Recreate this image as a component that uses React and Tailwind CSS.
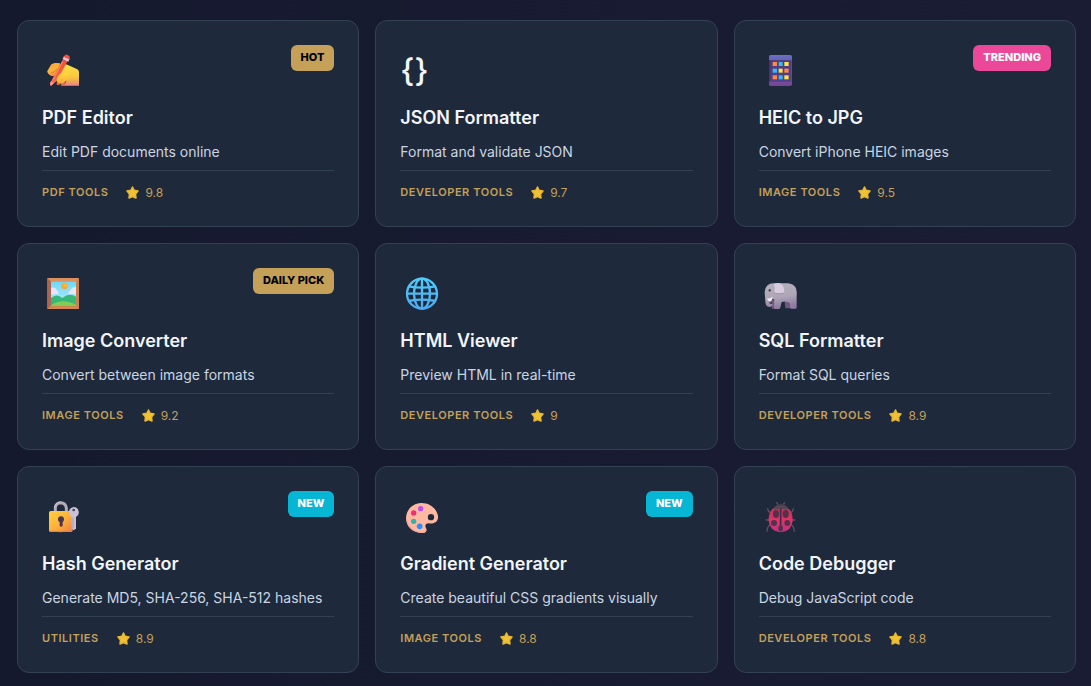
import React from 'react';
import { clsx } from 'clsx';

const WritingIcon = () => (
  <svg viewBox="6 -9 132 144" className="h-12 w-11" aria-hidden="true">
    <defs>
      <linearGradient id="fingerFill" x1="0" y1="0" x2="0.4" y2="1">
        <stop offset="0" stopColor="#ff9f35" />
        <stop offset="0.6" stopColor="#fcb53a" />
        <stop offset="1" stopColor="#f6923f" />
      </linearGradient>
      <linearGradient id="palmFill" x1="0" y1="0" x2="0" y2="1">
        <stop offset="0" stopColor="#ffe046" />
        <stop offset="0.6" stopColor="#f8c83f" />
        <stop offset="0.85" stopColor="#efa05c" />
        <stop offset="1" stopColor="#ee7f95" />
      </linearGradient>
      <linearGradient id="thumbFill" x1="0" y1="0" x2="0" y2="1">
        <stop offset="0" stopColor="#ffd940" />
        <stop offset="1" stopColor="#f9a93c" />
      </linearGradient>
      <linearGradient id="pencilFill" x1="0" y1="0" x2="1" y2="0">
        <stop offset="0" stopColor="#ff6f4d" />
        <stop offset="1" stopColor="#e64d33" />
      </linearGradient>
    </defs>
    <path d="M33 50C38 44 50 44 60 46L56 84H34C25 79 21 74 22 69Z" fill="url(#fingerFill)" />
    <path d="M34 74Q42 76 52 62" fill="none" stroke="#e2832f" strokeWidth="3" />
    <path d="M68 46L82 50L112 64Q117 67 117 73V113H72L82 92L58 78Z" fill="url(#palmFill)" />
    <path d="M66 102L73 98L76 111Q70 116 62 112ZM50 104L60 101L58 112L50 110Z" fill="#e9695a" />
    <path d="M71 30L85 36L49 100L35 112L31 104Z" fill="url(#pencilFill)" />
    <path d="M68 40L38 98" stroke="#ff8a66" strokeWidth="3" />
    <path d="M60 79C68 72 78 74 86 78C93 84 88 92 80 98L70 105C62 109 51 107 50 99C49 91 54 84 60 79Z" fill="url(#thumbFill)" />
    <path d="M72 24L89 32L85 41L68 33Z" fill="#ddc5e4" />
    <path d="M76 20Q79 19 88 24Q91 27 88 34L71 27Z" fill="#f4503d" />
    <path d="M31 101L42 105L33 114L30 111Z" fill="#f59e94" />
  </svg>
);

const PhoneIcon = () => (
  <svg viewBox="12 -9 132 144" className="h-12 w-11" aria-hidden="true">
    <defs>
      <linearGradient id="phoneFill" x1="0" y1="0" x2="0" y2="1">
        <stop offset="0" stopColor="#6d70c4" />
        <stop offset="0.17" stopColor="#6264b3" />
        <stop offset="0.18" stopColor="#503a78" />
        <stop offset="0.85" stopColor="#51418a" />
        <stop offset="0.87" stopColor="#7a4a9c" />
        <stop offset="1" stopColor="#6d4892" />
      </linearGradient>
    </defs>
    <rect x="42" y="21" width="69" height="93" rx="5" fill="url(#phoneFill)" />
    <path d="M44 36V100" stroke="#4c3263" strokeWidth="4" />
    <path d="M109 36V100" stroke="#5b52a3" strokeWidth="3" />
    <g fill="#ff8a45">
      <rect x="53" y="42" width="13" height="12" />
      <rect x="88" y="62" width="13" height="12" />
      <rect x="53" y="82" width="13" height="12" />
    </g>
    <g fill="#36baf7">
      <rect x="71" y="42" width="12" height="12" />
      <rect x="53" y="62" width="13" height="12" />
      <rect x="71" y="82" width="12" height="12" />
    </g>
    <g fill="#ffe04d">
      <rect x="88" y="42" width="13" height="12" />
      <rect x="71" y="62" width="12" height="12" />
      <rect x="88" y="82" width="13" height="12" />
    </g>
  </svg>
);

const PictureIcon = () => (
  <svg viewBox="6 -6 132 144" className="h-12 w-11" aria-hidden="true">
    <defs>
      <linearGradient id="skyFill" x1="0" y1="0" x2="0" y2="1">
        <stop offset="0" stopColor="#6ed8f8" />
        <stop offset="1" stopColor="#b5ecfb" />
      </linearGradient>
      <clipPath id="pictureClip">
        <rect x="33" y="34" width="75" height="73" />
      </clipPath>
    </defs>
    <rect x="22" y="24" width="95" height="93" rx="2" fill="#c98158" />
    <path d="M22 24L33 34V107L22 117Z" fill="#a96650" />
    <path d="M22 24H117L108 34H33Z" fill="#dc915f" />
    <path d="M22 117H117L108 107H33Z" fill="#d38552" />
    <g clipPath="url(#pictureClip)">
      <rect x="33" y="34" width="75" height="73" fill="url(#skyFill)" />
      <path d="M33 54Q47 49 51 62Q57 65 54 73H33ZM108 51Q96 51 92 60Q83 65 86 73H108Z" fill="#e9e4fa" />
      <path d="M33 84Q50 69 67 84Q88 66 108 80V107H33Z" fill="#37b878" />
      <path d="M33 106Q66 82 108 104V107H33Z" fill="#83cf55" />
      <circle cx="73" cy="48" r="9.5" fill="#fba72b" />
      <circle cx="75" cy="46" r="5" fill="#ffba3e" />
    </g>
  </svg>
);

const GlobeIcon = () => (
  <svg viewBox="9 -6 132 144" className="h-12 w-11" aria-hidden="true">
    <defs>
      <linearGradient id="globeStroke" x1="0" y1="20" x2="0" y2="118" gradientUnits="userSpaceOnUse">
        <stop offset="0" stopColor="#50cdfb" />
        <stop offset="1" stopColor="#4faaf1" />
      </linearGradient>
    </defs>
    <g fill="none" stroke="url(#globeStroke)" strokeWidth="7">
      <circle cx="75" cy="71" r="45" />
      <ellipse cx="75" cy="71" rx="24" ry="45" />
      <path d="M75 26L75.1 116" />
      <path d="M35 49Q75 57 115 49M35 93Q75 85 115 93" />
      <path d="M30 71L120 71.1" />
    </g>
  </svg>
);

const ElephantIcon = () => (
  <svg viewBox="12 -6 132 144" className="h-12 w-11" aria-hidden="true">
    <defs>
      <linearGradient id="elephantFill" x1="0" y1="0" x2="0.2" y2="1">
        <stop offset="0" stopColor="#b3b1bb" />
        <stop offset="0.6" stopColor="#aea6b7" />
        <stop offset="1" stopColor="#8f7aa3" />
      </linearGradient>
    </defs>
    <path d="M50 92L64 84L62 116H50ZM88 88H106V115H91Z" fill="#6d5a7a" />
    <path d="M56 40H98Q117 41 123 55Q126 63 125 80V112Q125 116 121 116H108Q105 116 105 112V100Q95 92 80 96L76 113Q75 117 71 117H60Q57 117 57 113L58 88L52 86Q53 92 48 96Q44 99 41 96Q43 102 48 101L53 103Q53 110 43 111Q30 109 31 92L29 66Q31 40 56 40Z" fill="url(#elephantFill)" />
    <path d="M57 42Q71 36 80 43Q88 50 88 69Q75 72 58 69Q61 55 57 42Z" fill="#d9cce1" />
    <path d="M57 69Q74 74 88 69" fill="none" stroke="#8b8399" strokeWidth="2" />
    <ellipse cx="44" cy="61" rx="3" ry="4" fill="#413044" />
    <path d="M36 85Q45 88 52 80Q54 89 44 94Q37 92 36 85Z" fill="#f6f0f7" />
  </svg>
);

const LockIcon = () => (
  <svg viewBox="6 -9 132 144" className="h-12 w-11" aria-hidden="true">
    <defs>
      <linearGradient id="lockFill" x1="0" y1="0" x2="1" y2="1">
        <stop offset="0" stopColor="#ffd23d" />
        <stop offset="0.5" stopColor="#ffb33b" />
        <stop offset="1" stopColor="#e88242" />
      </linearGradient>
    </defs>
    <path d="M46 57V42Q47 27 62 26Q77 27 79 42V57" fill="none" stroke="#b4aab9" strokeWidth="9" />
    <path d="M43 42Q46 25 62 24" fill="none" stroke="#d1cbd7" strokeWidth="3" />
    <rect x="27" y="51" width="71" height="63" rx="5" fill="url(#lockFill)" />
    <path d="M29 111Q62 116 96 110" fill="none" stroke="#ef7656" strokeWidth="3" />
    <circle cx="63" cy="76" r="9" fill="#493553" />
    <path d="M59 78H68V95Q63 101 59 95Z" fill="#493553" />
    <path d="M101 39A16 16 0 0 1 108 69V104L101 109L95 104V69A16 16 0 0 1 101 39Z" fill="#c9bfd7" />
    <path d="M99 70V104" stroke="#a99bbd" strokeWidth="3" />
    <circle cx="101" cy="48" r="4" fill="#434056" />
  </svg>
);

const PaletteIcon = () => (
  <svg viewBox="9 -9 132 144" className="h-12 w-11" aria-hidden="true">
    <path fillRule="evenodd" d="M72 27C98 26 119 43 123 66C125 84 110 91 96 88C84 88 83 96 88 104C91 112 84 119 72 117C45 115 28 98 27 73C28 47 45 29 72 27ZM102 60A9.500 9.500 0 1 0 102 79A9.500 9.500 0 0 0 102 60Z" fill="#ffb8a2" />
    <path d="M29 75C31 96 48 114 72 115C80 117 87 113 87 108" fill="none" stroke="#efa1a6" strokeWidth="3" />
    <circle cx="71" cy="44" r="8" fill="#b650ee" />
    <circle cx="50" cy="57" r="8" fill="#f02d7b" />
    <circle cx="50" cy="82" r="8" fill="#29b6ac" />
    <circle cx="68" cy="97" r="8.500" fill="#338cf1" />
  </svg>
);

const LadybugIcon = () => (
  <svg viewBox="12 -9 132 144" className="h-12 w-11" aria-hidden="true">
    <defs>
      <linearGradient id="shellFill" x1="0" y1="0" x2="0" y2="1">
        <stop offset="0" stopColor="#bd3153" />
        <stop offset="0.5" stopColor="#dd3567" />
        <stop offset="1" stopColor="#bd3484" />
      </linearGradient>
    </defs>
    <g fill="none" stroke="#5d5263" strokeWidth="4">
      <path d="M68 34Q68 28 64 25M85 34Q85 28 90 25" />
      <path d="M48 57Q38 53 38 43M105 57Q115 53 115 43" />
      <path d="M44 78H32M109 78H121M45 93Q36 98 36 113M109 93Q118 98 118 113" />
    </g>
    <path d="M57 43Q61 29 77 29Q94 29 98 43Z" fill="#44394a" />
    <path d="M52 45Q77 32 102 45Q114 57 113 80Q110 112 77 115Q44 112 41 80Q40 57 52 45Z" fill="url(#shellFill)" />
    <path d="M57 40Q77 28 98 40L93 47Q77 42 61 47Z" fill="#534955" />
    <path d="M77 43V112" stroke="#452a45" strokeWidth="5" />
    <g fill="#55304b">
      <ellipse cx="63" cy="60" rx="9" ry="12" />
      <ellipse cx="92" cy="60" rx="9" ry="12" />
      <circle cx="57" cy="87" r="9" />
      <circle cx="97" cy="87" r="9" />
      <ellipse cx="77" cy="103" rx="7" ry="9" />
    </g>
  </svg>
);

const StarIcon = () => (
  <svg viewBox="0 0 13 13" className="h-[13px] w-[13px]" aria-hidden="true">
    <path
      d="M6.500 1L8.100 4.300L12 4.900L9.500 7.900L10 12L6.500 10.500L3 12L3.500 7.900L1 4.900L4.900 4.300Z"
      fill="#f1c232"
      stroke="#e8b833"
      strokeWidth="1.500"
      strokeLinejoin="round"
    />
  </svg>
);

const BracesIcon = () => (
  <span className="block h-12 pt-1 text-[32px] leading-[44px] font-medium text-slate-100">{'{}'}</span>
);

const tools = [
  { name: 'PDF Editor', desc: 'Edit PDF documents online', category: 'PDF Tools', rating: 9.8, badge: 'Hot', Icon: WritingIcon },
  { name: 'JSON Formatter', desc: 'Format and validate JSON', category: 'Developer Tools', rating: 9.7, Icon: BracesIcon },
  { name: 'HEIC to JPG', desc: 'Convert iPhone HEIC images', category: 'Image Tools', rating: 9.5, badge: 'Trending', Icon: PhoneIcon },
  { name: 'Image Converter', desc: 'Convert between image formats', category: 'Image Tools', rating: 9.2, badge: 'Daily Pick', Icon: PictureIcon },
  { name: 'HTML Viewer', desc: 'Preview HTML in real-time', category: 'Developer Tools', rating: 9, Icon: GlobeIcon },
  { name: 'SQL Formatter', desc: 'Format SQL queries', category: 'Developer Tools', rating: 8.9, Icon: ElephantIcon },
  { name: 'Hash Generator', desc: 'Generate MD5, SHA-256, SHA-512 hashes', category: 'Utilities', rating: 8.9, badge: 'New', Icon: LockIcon },
  { name: 'Gradient Generator', desc: 'Create beautiful CSS gradients visually', category: 'Image Tools', rating: 8.8, badge: 'New', Icon: PaletteIcon },
  { name: 'Code Debugger', desc: 'Debug JavaScript code', category: 'Developer Tools', rating: 8.8, Icon: LadybugIcon },
];

const badgeStyles = {
  Hot: 'bg-[#c5a059] text-black',
  'Daily Pick': 'bg-[#c5a059] text-black',
  Trending: 'bg-[#ec4899] text-white',
  New: 'bg-[#06b6d4] text-white',
};

const ToolCard = ({ name, desc, category, rating, badge, Icon }) => (
  <a href="#" className="block rounded-xl border border-[#334155] bg-[#1e293b] p-6 transition-colors hover:border-[#c5a059]">
    <div className="mb-3 flex items-start justify-between">
      <Icon />
      {badge && (
        <span className={clsx('rounded-md px-2.5 pt-1 pb-1.5 text-[11px] leading-4 font-extrabold uppercase', badgeStyles[badge])}>
          {badge}
        </span>
      )}
    </div>
    <h3 className="text-lg leading-[26px] font-semibold text-slate-100">{name}</h3>
    <p className="mt-2 text-sm leading-[26px] text-slate-300">{desc}</p>
    <div className="mt-[5px] flex items-center gap-[18px] border-t border-[#334155] pt-3 leading-[19px] text-[#c5a059]">
      <span className="text-[11px] font-semibold tracking-wider uppercase">{category}</span>
      <span className="flex items-center gap-1.5 text-xs leading-[19px]">
        <StarIcon />
        {rating}
      </span>
    </div>
  </a>
);

export default function App() {
  return (
    <main className="min-h-screen bg-linear-to-r from-[#15192e] to-[#1a1c33] pt-5 pr-[15px] pb-3 pl-[17px] font-['Inter',sans-serif]">
      <div className="grid grid-cols-3 gap-4">
        {tools.map((tool) => (
          <ToolCard key={tool.name} {...tool} />
        ))}
      </div>
    </main>
  );
}
